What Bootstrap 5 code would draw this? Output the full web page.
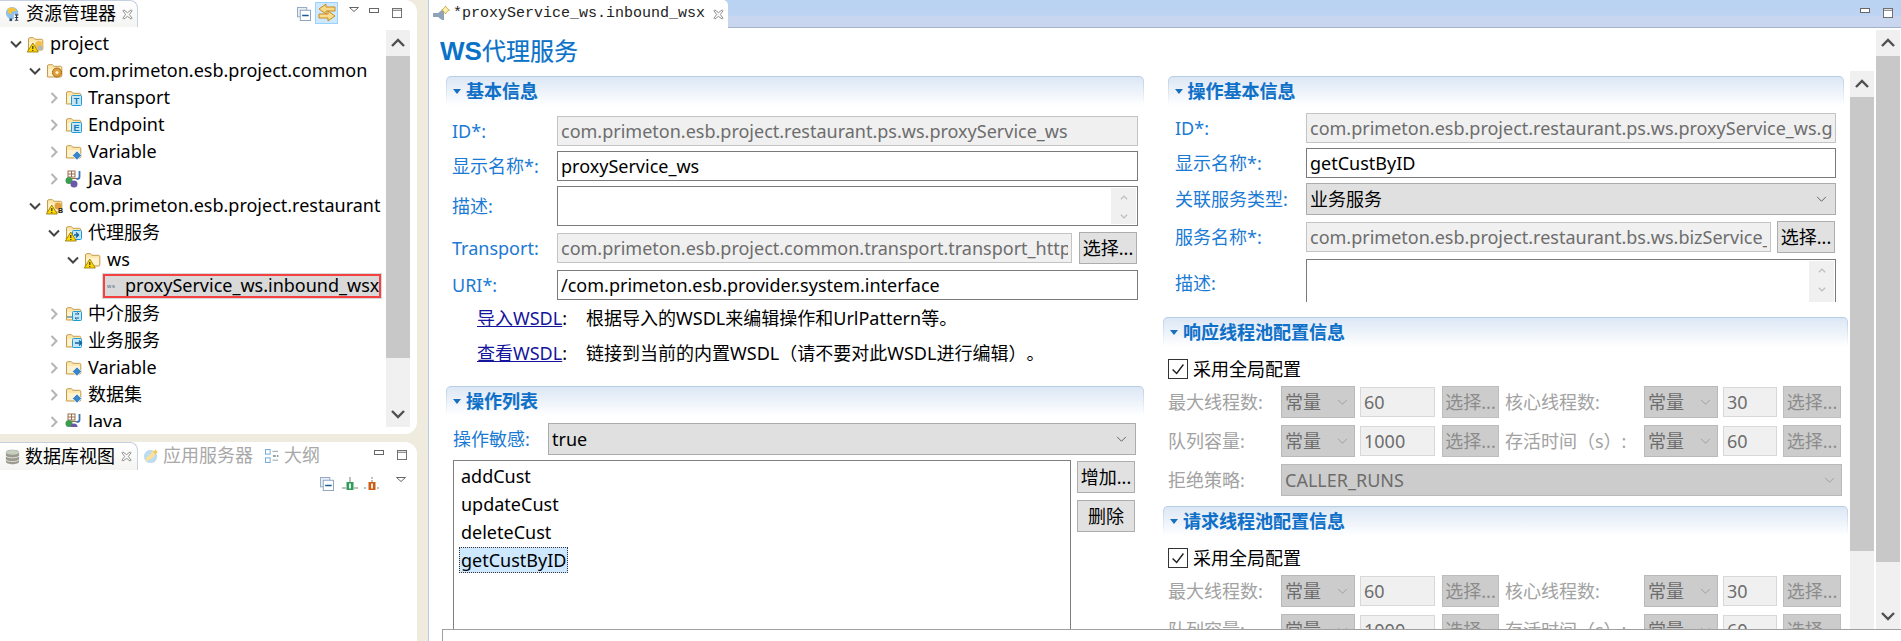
<!DOCTYPE html>
<html lang="zh-CN">
<head>
<meta charset="utf-8">
<title>Primeton ESB</title>
<link href="https://cdn.jsdelivr.net/npm/bootstrap@5.3.0/dist/css/bootstrap.min.css" rel="stylesheet">
<style>
html,body{height:641px;overflow:hidden}
body{background:#efebde;font-family:"Noto Sans","Noto Sans CJK SC",sans-serif;font-size:18px;color:#000;line-height:1.3;text-spacing-trim:space-all}
.app-root{height:641px;width:1901px}
.side-col{width:417px;flex:none}
.gutter-bar{width:11px;flex:none}
.pane-top{height:434px;background:#fff;border-radius:0 12px 12px 0;overflow:hidden}
.pane-low{height:199px;margin-top:8px;background:#fff;border-radius:0 12px 0 0;overflow:hidden}
.view-tabs{height:30px;flex:none}
.view-tab{width:138px;height:27px;padding-left:5px;background:linear-gradient(#fff,#f4f4f2);border:1px solid #c6d0e0;border-width:1px 1px 0 0;border-radius:0 8px 0 0;white-space:nowrap}
.view-tab .tab-txt{margin-left:5px;width:96px}
.dim-tab{color:#a8a8a8;white-space:nowrap}
.tbtn{display:block;flex:none}
.link-on{background:#cde8ff;border:1px solid #99d1ff;width:23px;height:22px;padding:0 0 0 1px;margin:2px 0 0 4px}
.tool-m{margin:7px 0 0 11px}
.tool-n{margin:8px 0 0 10px}
.tool-x{margin:8px 0 0 13px}
.tree-wrap{height:397px;overflow:hidden}
.tree-list{flex:1;padding-right:4px;min-width:0}
.tree-row{height:27px;white-space:nowrap;overflow:hidden}
.lv0{padding-left:8px}.lv1{padding-left:27px}.lv2{padding-left:46px}.lv3{padding-left:65px}
.tw{width:16px;height:16px;flex:none}
.ti{width:18px;height:18px;flex:none;margin:0 5px 0 3px}
.tree-sel{height:26px;width:280px;margin-left:102px;background:#d9d9d9;padding:2px}
.tree-sel-in{height:22px;width:276px;outline:2px solid #f44242;outline-offset:-1px;padding-left:3px;overflow:hidden;white-space:nowrap}
.sbar{width:24px;flex:none;background:#f0f0f0}
.sb-btn{height:26px;flex:none}
.sb-th{background:#c8c8c8}
.sb-th-a{height:302px}.sb-th-b{height:506px}.sb-th-c{height:454px}
.sb-rest{flex:1}
.tree-sb{margin-right:7px}
.low-tool{height:24px;padding-left:320px;margin-top:7px}
.editor-col{flex:1;border-left:1px solid #b6cbea;background:#fff;min-width:0}
.ed-tabs{height:28px;flex:none;border-bottom:1px solid #a6b2c8;background:linear-gradient(#b9d2f1,#bdd4f2 60%,#c8d6f0 61%,#c8d6f0)}
.ed-tab{width:299px;height:28px;margin-bottom:-1px;padding-left:3px;background:#fff;border-radius:0 5px 0 0;font-family:"Liberation Mono",monospace;font-size:15px;color:#222;white-space:nowrap}
.ed-tab .tab-name{margin-left:3px;width:260px}
.ed-body{height:601px;flex:none;overflow:hidden}
.form-area{flex:1;min-width:0}
.page-title{height:43px;padding:6px 0 0 11px;font-size:24px;color:#0a72c8;line-height:34px;-webkit-text-stroke:.2px #0a72c8}
.ws-mark{font-family:"Liberation Sans",sans-serif;font-size:26px;font-weight:700;-webkit-text-stroke:0}
.left-pane{width:726px;flex:none;padding:5px 0 0 17px;height:558px;overflow:hidden}
.right-pane{flex:1;height:558px;overflow:hidden}
.right-body{width:695px;flex:none;height:558px;overflow:hidden;padding:5px 0 0 8px}
.sec-bar{height:30px;background:linear-gradient(#b5cde6,#fff);padding:1px 1px 0;border-radius:5px 5px 0 0;flex:none}
.sec-in{height:29px;background:linear-gradient(#dce7f5,#fff);border-radius:4px 4px 0 0;color:#0f70c8;font-weight:700;padding-left:6px;line-height:29px;white-space:nowrap;-webkit-text-stroke:.1px #0f70c8}
.sec-in svg{margin:0 5px 3px 0}
.sec-l{width:698px}
.sec-r1{width:676px;margin-left:4.5px}
.sec-r2{width:685px}
.lab{color:#1a7ad4;white-space:nowrap;flex:none;line-height:30px}
.fld{border-radius:0;font-size:18px;padding:0 3px;height:30px;border:1px solid #7a7a7a;color:#000;line-height:28px;box-shadow:none;min-width:0;font-family:inherit;background-color:#fff}
.fld:disabled{background-color:#f0f0f0;border-color:#c4c4c4;color:#6d6d6d;opacity:1}
textarea.fld{resize:none;min-height:0}
.selx{border-radius:0;font-size:18px;padding:0 22px 0 3px;height:32px;border:1px solid #acacac;color:#000;background-color:#e0e0e0;line-height:30px;box-shadow:none;font-family:inherit;background-image:url("data:image/svg+xml,%3csvg xmlns='http://www.w3.org/2000/svg' viewBox='0 0 12 8'%3e%3cpath fill='none' stroke='%23555' d='M1 1l5 5 5-5'/%3e%3c/svg%3e");background-size:11px 7px;background-position:right 8px center;min-width:0}
.selx:disabled{background-color:#ccc;border-color:#b9b9b9;color:#6d6d6d;opacity:1;background-image:url("data:image/svg+xml,%3csvg xmlns='http://www.w3.org/2000/svg' viewBox='0 0 12 8'%3e%3cpath fill='none' stroke='%23999' d='M1 1l5 5 5-5'/%3e%3c/svg%3e")}
.pick{border-radius:0;font-size:18px;padding:0;height:32px;width:58px;flex:none;border:1px solid #adadad;background:#e1e1e1;color:#000;line-height:28px;white-space:nowrap;overflow:hidden;font-family:inherit}
.pick:disabled{background:#ccc;border-color:#bdbdbd;color:#8c8c8c;opacity:1}
.fr{align-items:center}
.fr-a{margin:5px 0 0 6px;width:686px}
.fr-a .lab{width:105px}
.fr-a>.fld{width:581px}
.fr-first{margin-top:10px}
.fr-tall{height:40px}
.ta-wrap{width:581px;height:40px;position:relative;flex:none}
.ta-wrap textarea{width:100%;height:100%}
.ta-sb{position:absolute;right:2px;top:2px;bottom:2px;width:25px;background:#f0f0f0}
.ta-sb svg{display:block;margin:5px auto 8px}
.fr-tr{margin-top:6px;height:32px}
.fr-tr .fld{width:515px;margin-right:7px}
.fr-b{margin:6px 0 0 6px;width:686px}
.fr-b .lab{width:105px}
.fr-b .fld{width:581px}
.lnk-row{height:27px;white-space:nowrap;padding-left:31px;line-height:27px}
.lnk-row a{color:#14149c;text-decoration:underline}
.lnk-row .lnk-txt{margin-left:19px}
.lnk-1{margin-top:5px}
.lnk-2{margin-top:8px}
.sec-op{margin-top:19px}
.fr-s{margin:7px 0 0 7px}
.fr-s .lab{width:95px}
.fr-s .selx{width:588px}
.ops-wrap{margin:5px 0 0 7px}
.ops-list{width:618px;height:190px;border:1px solid #7f7f7f;border-radius:0;padding:2px 0 0 5px;background:#fff;flex:none}
.ops-item{border:0;background:none;padding:0 2px;height:28px;line-height:26px;width:max-content;color:#000}
.ops-item.is-cur{background:#cde8ff;outline:1px dotted #333;outline-offset:-1px;height:26px}
.ops-btns{margin-left:6px;gap:7px;padding-top:1px}
.r-row{margin:5px 0 0 4.5px;width:676px}
.r-row .lab{width:138.5px;padding-left:7.5px}
.r-row>.fld,.r-row>.selx{width:530px}
.r-first{margin-top:7px}
.r-sel{height:32px}
.r-svc .fld{width:465px;margin-right:6px}
.r-svc{margin-top:6px;height:32px}
.r-desc{height:43px;overflow:hidden;align-items:flex-start;margin-top:6px}
.r-desc .lab{line-height:48px}
.r-desc .ta-wrap{width:530px;height:60px}
.sec-mt{margin-top:15px}
.chk-row{height:20px;margin:12px 0 0 5px;white-space:nowrap;line-height:20px}
.chk-box{width:20px;height:20px;margin:0 5px 0 0;border-radius:0!important;border:1px solid #333;background-color:#fff;flex:none;opacity:1!important}
.chk-box:checked{background-color:#fff;border-color:#333;background-image:url("data:image/svg+xml,%3csvg xmlns='http://www.w3.org/2000/svg' viewBox='0 0 20 20'%3e%3cpath fill='none' stroke='%23222' stroke-width='1.6' d='M4 10.5l4.5 4.5L16 5'/%3e%3c/svg%3e")}
.tp-row{margin:7px 0 0 5px;height:32px;align-items:center;white-space:nowrap}
.tp-row .lab{color:#a2a2a2}
.tp-row .fld{color:#6d6d6d;background:#f0f0f0;border-color:#d8d8d8}
.tp-row>:nth-child(1){width:113px}
.tp-row>:nth-child(2){width:74px}
.tp-row>:nth-child(3){width:75px;margin-left:5px}
.tp-row>:nth-child(4){width:57px;margin-left:7px}
.tp-row>:nth-child(5){width:139px;margin-left:6px}
.tp-row>:nth-child(6){width:74px}
.tp-row>:nth-child(7){width:54px;margin-left:5px}
.tp-row>:nth-child(8){width:58px;margin-left:6px}
.tp-row>.selx{background-position:right 6px center;padding-right:18px}
.tp-row>.tp-wide{width:561px}
.sec-next{margin-top:10px}
.ed-foot{height:12px;flex:none;margin-left:13px;border:1px solid #a0a0a0;border-width:1px 0 0 1px}
.outer-sb{margin:2px 1px 0 2px}
.tool-first{margin:7px 0 0 159px}
.low-tab{height:28px}
.low-txt{margin-left:4px;width:97px}
.dim-wrap{height:28px;margin-left:5px}
.dim-ico{margin:0 5px 0 12px}
.low-mn{margin:8px 0 0 54px}
.low-tool .lt-a{margin-right:8px}
.low-tool .lt-b{margin-right:6px}
.low-tool .lt-c{margin-right:16px}
.ws-ico{margin-right:7px}
.ed-mn{margin-top:8px}
.ed-mx{margin:8px 8px 0 13px}
</style>
</head>
<body>
<svg width="0" height="0" class="position-absolute">
<defs>
<symbol id="ch-d" viewBox="0 0 16 16"><path d="M3 5.500l5 5 5-5" fill="none" stroke="#444" stroke-width="2"/></symbol>
<symbol id="ch-r" viewBox="0 0 16 16"><path d="M5.500 3l5 5-5 5" fill="none" stroke="#b4b4b4" stroke-width="2"/></symbol>
<symbol id="sb-u" viewBox="0 0 16 16"><path d="M2 11l6-6 6 6" fill="none" stroke="#505050" stroke-width="2.400"/></symbol>
<symbol id="sb-n" viewBox="0 0 16 16"><path d="M2 5l6 6 6-6" fill="none" stroke="#505050" stroke-width="2.400"/></symbol>
<symbol id="sb-ul" viewBox="0 0 16 16"><path d="M3 10l5-5 5 5" fill="none" stroke="#bdbdbd" stroke-width="2"/></symbol>
<symbol id="sb-nl" viewBox="0 0 16 16"><path d="M3 6l5 5 5-5" fill="none" stroke="#bdbdbd" stroke-width="2"/></symbol>
<symbol id="fd" viewBox="0 0 18 18"><path d="M1.500 14V4c0-.8.5-1.300 1.300-1.300h3.500L8 4.300h6.500c.8 0 1.300.5 1.300 1.300V14c0 .5-.5 1-1 1h-13c-.5 0-.8-.5-.8-1z" fill="#fde7ac" stroke="#c39a4e"/><path d="M2.500 7h12.500v7H2.500z" fill="#fff3cf"/></symbol>
<symbol id="wrn" viewBox="0 0 18 18"><path d="M5.800 8l5.500 9H.3z" fill="#ffd800" stroke="#8c7000" stroke-width=".8"/><path d="M5.800 11v3M5.800 15v1" stroke="#222" stroke-width="1.100"/></symbol>
<symbol id="x" viewBox="0 0 12 12"><path d="M2 1l4 3 4-3 1 1-3 4 3 4-1 1-4-3-4 3-1-1 3-4-3-4z" fill="#fff" stroke="#777" stroke-width=".9"/></symbol>
<symbol id="col" viewBox="0 0 15 15"><rect x=".5" y=".5" width="10" height="10" fill="#e8eef5" stroke="#93a7c1"/><rect x="3.500" y="3.500" width="11" height="11" fill="#fff" stroke="#8aa0bc"/><path d="M5.500 9h7" stroke="#1b5c98" stroke-width="1.600"/></symbol>
<symbol id="lnk" viewBox="0 0 20 20"><path d="M9 1L2 6l7 5V8h9V4H9z" fill="#f7d98c" stroke="#c98b17"/><path d="M11 8l7 5-7 5v-3H2v-4h9z" fill="#f9dc90" stroke="#c98b17"/></symbol>
<symbol id="tri" viewBox="0 0 10 5"><path d="M.5.5h9L5 4.500z" fill="#fff" stroke="#666"/></symbol>
<symbol id="mn" viewBox="0 0 10 5"><rect x=".5" y=".5" width="9" height="4" fill="#fff" stroke="#666"/></symbol>
<symbol id="mx" viewBox="0 0 11 11"><rect x=".5" y=".5" width="10" height="10" fill="#fff" stroke="#666"/><path d="M.5 2.500h10" stroke="#666"/></symbol>
<symbol id="ji" viewBox="0 0 18 18"><rect x="3" y="1" width="7" height="6" fill="#fff" stroke="#9a6d4a"/><path d="M6.500 1v6M3 4h7M2 8.500h10" stroke="#9a6d4a"/><path d="M14.500 1v6c0 1.500-1 2-3 2" fill="none" stroke="#3973b8" stroke-width="1.800"/><circle cx="4" cy="10.500" r="3.500" fill="#3e9b4f"/><circle cx="9" cy="14" r="3.500" fill="#6b58a8"/></symbol>
<symbol id="globe" viewBox="0 0 18 18"><circle cx="8" cy="8" r="7" fill="#8fc1ea"/><path d="M3 3c3-2 8-2 10 2-3 1-5 0-6 3S3 9 3 3z" fill="#f5c43c"/><path d="M10 9h6v8h-6z" fill="#fff"/><path d="M11 10h4M13 10v6M11 13h4M11 16h4" stroke="#2a3a4a" stroke-width="1.200"/><path d="M5 14h3v3H5z" fill="#30506e"/></symbol>
<symbol id="db" viewBox="0 0 16 16"><path d="M1 3c0-3.500 14-3.500 14 0v10c0 3.500-14 3.500-14 0z" fill="#9a9a90"/><ellipse cx="8" cy="3" rx="7" ry="2.500" fill="#c8cfc0"/><path d="M1 7c2 2.500 12 2.500 14 0M1 11c2 2.500 12 2.500 14 0" fill="none" stroke="#e4e4dc"/></symbol>
<symbol id="swirl" viewBox="0 0 18 18"><circle cx="8.500" cy="9.500" r="7.500" fill="#bcdcf3"/><path d="M9 2c4 1 6 5 3 8s-7 3-8 6c-2-3 0-6 3-8s4-4 2-6z" fill="#fbe09c"/><path d="M14 1.500l1 2 2 1-2 1-1 2-1-2-2-1 2-1z" fill="#f3c74e"/></symbol>
<symbol id="outl" viewBox="0 0 15 15"><rect x=".5" y=".5" width="5" height="5" fill="#fff" stroke="#6ea8d8"/><rect x=".5" y="9.500" width="5" height="5" fill="#fff" stroke="#6ea8d8"/><path d="M8 2.500h6M9 7h2v1H9zM13 7h1v1h-1zM8 12h6" stroke="#8aa0a0"/></symbol>
<symbol id="grn" viewBox="0 0 16 15"><path d="M8 0v5M0 11h4M12 11h4" stroke="#aaa" stroke-width="1.500"/><rect x="4.500" y="5" width="7" height="8" fill="#2f9a5b"/><rect x="7" y="6.500" width="2" height="5" fill="#dff2e2"/></symbol>
<symbol id="red" viewBox="0 0 16 15"><path d="M8 0v5M0 11h3M13 11h3" stroke="#aaa" stroke-width="1.500" stroke-dasharray="2 1"/><rect x="4.500" y="5" width="7" height="8" fill="#cc5d14"/><rect x="7" y="6.500" width="2" height="5" fill="#fbe7d5"/></symbol>
<symbol id="ed" viewBox="0 0 18 18"><path d="M1 8h5l4-3h2v10h-2l-4-3H1z" fill="#8ea2b8"/><path d="M13.500 1l1.500 2.500L17.500 5 15 6.500 13.500 9 12 6.500 9.500 5 12 3.500z" fill="#fff4b8" stroke="#c9a232" stroke-width=".8"/></symbol>
<symbol id="stri" viewBox="0 0 8 5"><path d="M0 0h8L4 5z" fill="#1870bc"/></symbol>
<symbol id="ws" viewBox="0 0 12 10"><text x="0" y="7" font-size="6.500" font-family="Liberation Sans,sans-serif" fill="#546a82" letter-spacing=".8">ws</text></symbol>
</defs>
</svg>

<div class="app-root d-flex">
  <aside class="side-col d-flex flex-column">
    <section class="pane-top d-flex flex-column">
      <div class="view-tabs d-flex">
        <div class="view-tab d-flex align-items-center flex-none">
          <svg width="16" height="18"><use href="#globe"/></svg>
          <span class="tab-txt">资源管理器</span>
          <svg width="11" height="11"><use href="#x"/></svg>
        </div>
        <div class="d-flex align-items-start">
          <svg class="tbtn tool-first" width="14" height="14"><use href="#col"/></svg>
          <span class="link-on tbtn"><svg width="20" height="20" class="d-block"><use href="#lnk"/></svg></span>
          <svg class="tbtn tool-m" width="10" height="5"><use href="#tri"/></svg>
          <svg class="tbtn tool-n" width="10" height="5"><use href="#mn"/></svg>
          <svg class="tbtn tool-x" width="10" height="10"><use href="#mx"/></svg>
        </div>
      </div>
      <div class="tree-wrap d-flex">
        <div class="tree-list">
          <div class="tree-row lv0 d-flex align-items-center"><svg class="tw"><use href="#ch-d"/></svg><svg class="ti"><use href="#fd"/><circle cx="12" cy="10" r="4" fill="#f2c14e"/><circle cx="13" cy="13" r="2.500" fill="#b8b8b8"/><use href="#wrn"/></svg>project</div>
          <div class="tree-row lv1 d-flex align-items-center"><svg class="tw"><use href="#ch-d"/></svg><svg class="ti"><use href="#fd"/><circle cx="11" cy="10.500" r="4.500" fill="#e0a03c" stroke="#a26a1e"/><circle cx="11" cy="10.500" r="1.500" fill="#fff2cc"/></svg>com.primeton.esb.project.common</div>
          <div class="tree-row lv2 d-flex align-items-center"><svg class="tw"><use href="#ch-r"/></svg><svg class="ti"><use href="#fd"/><rect x="6.500" y="6.500" width="10" height="10" rx="1" fill="#c5e6f8" stroke="#1d9bd6"/><text x="11.500" y="14.500" text-anchor="middle" font-size="9" font-weight="700" font-family="Liberation Sans,sans-serif" fill="#1679b8">T</text></svg>Transport</div>
          <div class="tree-row lv2 d-flex align-items-center"><svg class="tw"><use href="#ch-r"/></svg><svg class="ti"><use href="#fd"/><rect x="6.500" y="6.500" width="10" height="10" rx="1" fill="#c5e6f8" stroke="#1d9bd6"/><text x="11.500" y="14.500" text-anchor="middle" font-size="9" font-weight="700" font-family="Liberation Sans,sans-serif" fill="#1679b8">E</text></svg>Endpoint</div>
          <div class="tree-row lv2 d-flex align-items-center"><svg class="tw"><use href="#ch-r"/></svg><svg class="ti"><use href="#fd"/><path d="M12 8l4.500 4.500L12 17l-4.500-4.500z" fill="#3a86c8" stroke="#dcecf8" stroke-width=".8"/></svg>Variable</div>
          <div class="tree-row lv2 d-flex align-items-center"><svg class="tw"><use href="#ch-r"/></svg><svg class="ti"><use href="#ji"/></svg>Java</div>
          <div class="tree-row lv1 d-flex align-items-center"><svg class="tw"><use href="#ch-d"/></svg><svg class="ti"><use href="#fd"/><circle cx="12" cy="9" r="3.500" fill="#e0a03c"/><use href="#wrn"/><text x="12" y="16" font-size="7" font-weight="700" font-family="Liberation Sans,sans-serif" fill="#222">B</text></svg>com.primeton.esb.project.restaurant</div>
          <div class="tree-row lv2 d-flex align-items-center"><svg class="tw"><use href="#ch-d"/></svg><svg class="ti"><use href="#fd"/><rect x="7.500" y="6.500" width="9" height="9" rx="1" fill="#c5e6f8" stroke="#1d9bd6"/><path d="M9 11h4m-2-2.500l2.500 2.500-2.500 2.500" fill="none" stroke="#10629c" stroke-width="1.300"/><use href="#wrn"/></svg>代理服务</div>
          <div class="tree-row lv3 d-flex align-items-center"><svg class="tw"><use href="#ch-d"/></svg><svg class="ti"><use href="#fd"/><use href="#wrn"/></svg>ws</div>
          <div class="tree-row"><div class="tree-sel"><div class="tree-sel-in d-flex align-items-center"><svg width="11" height="10" class="flex-none ws-ico"><use href="#ws"/></svg>proxyService_ws.inbound_wsx</div></div></div>
          <div class="tree-row lv2 d-flex align-items-center"><svg class="tw"><use href="#ch-r"/></svg><svg class="ti"><use href="#fd"/><rect x="7.500" y="6.500" width="9" height="9" rx="1" fill="#c5e6f8" stroke="#1d9bd6"/><path d="M2 12h5m3-3h4m0 0l-1.500-1.500M14 13h-4m0 0l1.500 1.500" fill="none" stroke="#10629c"/></svg>中介服务</div>
          <div class="tree-row lv2 d-flex align-items-center"><svg class="tw"><use href="#ch-r"/></svg><svg class="ti"><use href="#fd"/><rect x="7.500" y="6.500" width="9" height="9" rx="1" fill="#c5e6f8" stroke="#1d9bd6"/><path d="M10 11h6m-2-2.500l2.500 2.500-2.500 2.500" fill="none" stroke="#10629c" stroke-width="1.300"/></svg>业务服务</div>
          <div class="tree-row lv2 d-flex align-items-center"><svg class="tw"><use href="#ch-r"/></svg><svg class="ti"><use href="#fd"/><path d="M12 8l4.500 4.500L12 17l-4.500-4.500z" fill="#3a86c8" stroke="#dcecf8" stroke-width=".8"/></svg>Variable</div>
          <div class="tree-row lv2 d-flex align-items-center"><svg class="tw"><use href="#ch-r"/></svg><svg class="ti"><use href="#fd"/><path d="M12 8l4.500 4.500L12 17l-4.500-4.500z" fill="#3a86c8" stroke="#dcecf8" stroke-width=".8"/></svg>数据集</div>
          <div class="tree-row lv2 d-flex align-items-center"><svg class="tw"><use href="#ch-r"/></svg><svg class="ti"><use href="#ji"/></svg>Java</div>
        </div>
        <div class="sbar tree-sb d-flex flex-column">
          <div class="sb-btn d-flex align-items-center justify-content-center"><svg width="16" height="16"><use href="#sb-u"/></svg></div>
          <div class="sb-th sb-th-a"></div>
          <div class="sb-rest"></div>
          <div class="sb-btn d-flex align-items-center justify-content-center"><svg width="16" height="16"><use href="#sb-n"/></svg></div>
        </div>
      </div>
    </section>
    <section class="pane-low">
      <div class="d-flex align-items-start">
        <div class="view-tab low-tab d-flex align-items-center flex-none">
          <svg width="15" height="16"><use href="#db"/></svg>
          <span class="tab-txt low-txt">数据库视图</span>
          <svg width="11" height="11"><use href="#x"/></svg>
        </div>
        <div class="d-flex align-items-center dim-tab dim-wrap">
          <svg width="16" height="18" class="me-1"><use href="#swirl"/></svg>应用服务器
          <svg width="14" height="14" class="dim-ico"><use href="#outl"/></svg>大纲
        </div>
        <svg class="tbtn low-mn" width="10" height="5"><use href="#mn"/></svg>
        <svg class="tbtn tool-x" width="10" height="10"><use href="#mx"/></svg>
      </div>
      <div class="low-tool d-flex align-items-start">
        <svg class="lt-a" width="14" height="14"><use href="#col"/></svg>
        <svg class="lt-b" width="16" height="15"><use href="#grn"/></svg>
        <svg class="lt-c" width="16" height="15"><use href="#red"/></svg>
        <svg width="10" height="5"><use href="#tri"/></svg>
      </div>
    </section>
  </aside>
  <div class="gutter-bar"></div>

  <main class="editor-col d-flex flex-column">
    <div class="ed-tabs d-flex">
      <div class="ed-tab d-flex align-items-center flex-none">
        <svg width="18" height="18" class="flex-none"><use href="#ed"/></svg>
        <span class="tab-name">*proxyService_ws.inbound_wsx</span>
        <svg width="11" height="11" class="flex-none"><use href="#x"/></svg>
      </div>
      <svg class="tbtn ms-auto ed-mn" width="10" height="5"><use href="#mn"/></svg>
      <svg class="tbtn ed-mx" width="10" height="10"><use href="#mx"/></svg>
    </div>
    <div class="ed-body d-flex">
      <div class="form-area d-flex flex-column">
        <div class="page-title"><span class="ws-mark">WS</span>代理服务</div>
        <div class="d-flex">
          <div class="left-pane">
            <div class="sec-bar sec-l"><div class="sec-in"><svg width="8" height="5"><use href="#stri"/></svg>基本信息</div></div>
            <div class="fr fr-a fr-first d-flex"><label class="lab">ID*:</label><input class="form-control fld" disabled value="com.primeton.esb.project.restaurant.ps.ws.proxyService_ws"></div>
            <div class="fr fr-a d-flex"><label class="lab">显示名称*:</label><input class="form-control fld" value="proxyService_ws"></div>
            <div class="fr fr-a fr-tall d-flex"><label class="lab">描述:</label><div class="ta-wrap"><textarea class="form-control fld"></textarea><div class="ta-sb"><svg width="12" height="10"><use href="#sb-ul"/></svg><svg width="12" height="10"><use href="#sb-nl"/></svg></div></div></div>
            <div class="fr fr-a fr-tr d-flex"><label class="lab">Transport:</label><input class="form-control fld" disabled value="com.primeton.esb.project.common.transport.transport_http"><button class="btn pick" type="button">选择...</button></div>
            <div class="fr fr-b d-flex"><label class="lab">URI*:</label><input class="form-control fld" value="/com.primeton.esb.provider.system.interface"></div>
            <div class="lnk-row lnk-1"><a href="#">导入WSDL</a>:<span class="lnk-txt">根据导入的WSDL来编辑操作和UrlPattern等。</span></div>
            <div class="lnk-row lnk-2"><a href="#">查看WSDL</a>:<span class="lnk-txt">链接到当前的内置WSDL（请不要对此WSDL进行编辑）。</span></div>
            <div class="sec-bar sec-l sec-op"><div class="sec-in"><svg width="8" height="5"><use href="#stri"/></svg>操作列表</div></div>
            <div class="fr fr-s d-flex"><label class="lab">操作敏感:</label><select class="form-select selx"><option>true</option></select></div>
            <div class="ops-wrap d-flex">
              <div class="ops-list list-group">
                <div class="list-group-item ops-item">addCust</div>
                <div class="list-group-item ops-item">updateCust</div>
                <div class="list-group-item ops-item">deleteCust</div>
                <div class="list-group-item ops-item is-cur">getCustByID</div>
              </div>
              <div class="ops-btns d-flex flex-column"><button class="btn pick" type="button">增加...</button><button class="btn pick" type="button">删除</button></div>
            </div>
          </div>
          <div class="right-pane d-flex">
            <div class="right-body">
              <div class="sec-bar sec-r1"><div class="sec-in"><svg width="8" height="5"><use href="#stri"/></svg>操作基本信息</div></div>
              <div class="fr r-row r-first d-flex"><label class="lab">ID*:</label><input class="form-control fld" disabled value="com.primeton.esb.project.restaurant.ps.ws.proxyService_ws.getCustByID"></div>
              <div class="fr r-row d-flex"><label class="lab">显示名称*:</label><input class="form-control fld" value="getCustByID"></div>
              <div class="fr r-row r-sel d-flex"><label class="lab">关联服务类型:</label><select class="form-select selx"><option>业务服务</option></select></div>
              <div class="fr r-row r-svc d-flex"><label class="lab">服务名称*:</label><input class="form-control fld" disabled value="com.primeton.esb.project.restaurant.bs.ws.bizService_ws"><button class="btn pick" type="button">选择...</button></div>
              <div class="r-row r-desc d-flex"><label class="lab">描述:</label><div class="ta-wrap"><textarea class="form-control fld"></textarea><div class="ta-sb"><svg width="12" height="10"><use href="#sb-ul"/></svg><svg width="12" height="10"><use href="#sb-nl"/></svg></div></div></div>
              <div class="sec-bar sec-r2 sec-mt"><div class="sec-in"><svg width="8" height="5"><use href="#stri"/></svg>响应线程池配置信息</div></div>
              <div class="chk-row d-flex align-items-center"><input class="form-check-input chk-box" type="checkbox" checked><span>采用全局配置</span></div>
              <div class="tp-row d-flex"><span class="lab">最大线程数:</span><select class="form-select selx" disabled><option>常量</option></select><input class="form-control fld" disabled value="60"><button class="btn pick" disabled type="button">选择...</button><span class="lab">核心线程数:</span><select class="form-select selx" disabled><option>常量</option></select><input class="form-control fld" disabled value="30"><button class="btn pick" disabled type="button">选择...</button></div>
              <div class="tp-row d-flex"><span class="lab">队列容量:</span><select class="form-select selx" disabled><option>常量</option></select><input class="form-control fld" disabled value="1000"><button class="btn pick" disabled type="button">选择...</button><span class="lab">存活时间（s）:</span><select class="form-select selx" disabled><option>常量</option></select><input class="form-control fld" disabled value="60"><button class="btn pick" disabled type="button">选择...</button></div>
              <div class="tp-row d-flex"><span class="lab">拒绝策略:</span><select class="form-select selx tp-wide" disabled><option>CALLER_RUNS</option></select></div>
              <div class="sec-bar sec-r2 sec-next"><div class="sec-in"><svg width="8" height="5"><use href="#stri"/></svg>请求线程池配置信息</div></div>
              <div class="chk-row d-flex align-items-center"><input class="form-check-input chk-box" type="checkbox" checked><span>采用全局配置</span></div>
              <div class="tp-row d-flex"><span class="lab">最大线程数:</span><select class="form-select selx" disabled><option>常量</option></select><input class="form-control fld" disabled value="60"><button class="btn pick" disabled type="button">选择...</button><span class="lab">核心线程数:</span><select class="form-select selx" disabled><option>常量</option></select><input class="form-control fld" disabled value="30"><button class="btn pick" disabled type="button">选择...</button></div>
              <div class="tp-row d-flex"><span class="lab">队列容量:</span><select class="form-select selx" disabled><option>常量</option></select><input class="form-control fld" disabled value="1000"><button class="btn pick" disabled type="button">选择...</button><span class="lab">存活时间（s）:</span><select class="form-select selx" disabled><option>常量</option></select><input class="form-control fld" disabled value="60"><button class="btn pick" disabled type="button">选择...</button></div>
            </div>
            <div class="sbar d-flex flex-column">
              <div class="sb-btn d-flex align-items-center justify-content-center"><svg width="16" height="16"><use href="#sb-u"/></svg></div>
              <div class="sb-th sb-th-c"></div>
              <div class="sb-rest"></div>
            </div>
          </div>
        </div>
      </div>
      <div class="sbar outer-sb d-flex flex-column">
        <div class="sb-btn d-flex align-items-center justify-content-center"><svg width="16" height="16"><use href="#sb-u"/></svg></div>
        <div class="sb-th sb-th-b"></div>
        <div class="sb-rest"></div>
        <div class="sb-btn d-flex align-items-center justify-content-center"><svg width="16" height="16"><use href="#sb-n"/></svg></div>
      </div>
    </div>
    <div class="ed-foot"></div>
  </main>
</div>
</body>
</html>
